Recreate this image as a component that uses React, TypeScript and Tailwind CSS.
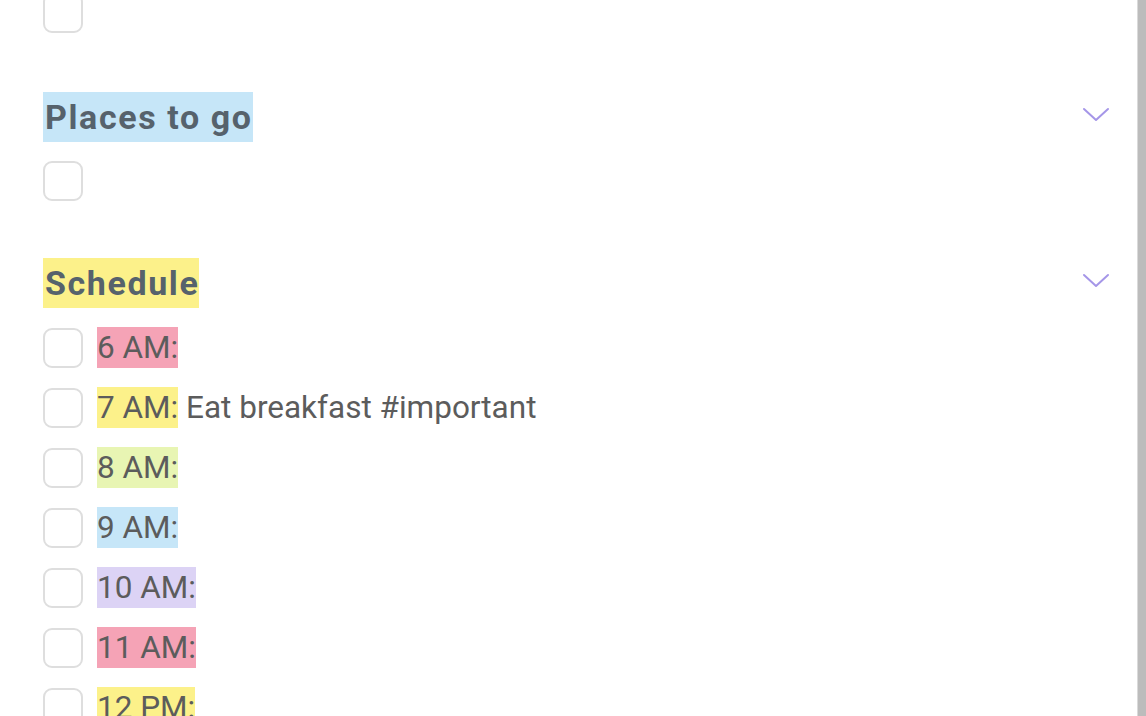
import React from 'react';

type Slot = { time: string; bg: string; note?: string };

const slots: Slot[] = [
  { time: '6 AM:', bg: 'bg-[#f5a3b6]' },
  { time: '7 AM:', bg: 'bg-[#fcf18a]', note: 'Eat breakfast #important' },
  { time: '8 AM:', bg: 'bg-[#e8f5b3]' },
  { time: '9 AM:', bg: 'bg-[#c6e6f8]' },
  { time: '10 AM:', bg: 'bg-[#dcd3f5]' },
  { time: '11 AM:', bg: 'bg-[#f5a3b6]' },
  { time: '12 PM:', bg: 'bg-[#fcf18a]' },
];

const Box = () => (
  <div className="w-[40px] h-[40px] shrink-0 rounded-[9px] border-2 border-[#dedede] bg-white" />
);

const Chevron = () => (
  <svg width="28" height="15" viewBox="0 0 28 15" fill="none" className="mr-[27px] -mt-[6px]">
    <path d="M2 2 L14 13 L26 2" stroke="#a596e8" strokeWidth="2" strokeLinecap="round" strokeLinejoin="round" />
  </svg>
);

const Header = ({ title, bg }: { title: string; bg: string }) => (
  <div className="flex items-center justify-between">
    <span className={`${bg} h-[50px] leading-[50px] pl-[2px] text-[34px] tracking-[1.6px] font-bold text-[#56626c]`}>{title}</span>
    <Chevron />
  </div>
);

export default function App() {
  return (
    <div className="flex h-[716px] w-full overflow-hidden bg-white" style={{ fontFamily: 'Roboto, "Liberation Sans", sans-serif' }}>
      <div className="flex-1 pl-[43px]">
        <div className="flex flex-col -mt-[7px]">
          <Box />
          <div className="mt-[59px]">
            <Header title="Places to go" bg="bg-[#c6e6f8]" />
          </div>
          <div className="mt-[19px]">
            <Box />
          </div>
          <div className="mt-[57px]">
            <Header title="Schedule" bg="bg-[#fcf18a]" />
          </div>
          <div className="mt-[19px] flex flex-col gap-[19px]">
            {slots.map((s) => (
              <div key={s.time} className="flex items-center gap-[14px]">
                <Box />
                <div className="text-[31.5px] leading-[41px] text-[#5c5c5c] whitespace-nowrap">
                  <span className={`${s.bg} inline-block h-[41px]`}>{s.time}</span>
                  {s.note && <span> {s.note}</span>}
                </div>
              </div>
            ))}
          </div>
        </div>
      </div>
      <div className="w-[9px] h-full bg-[#bcbcbc] border-l border-[#dadada]" />
    </div>
  );
}
